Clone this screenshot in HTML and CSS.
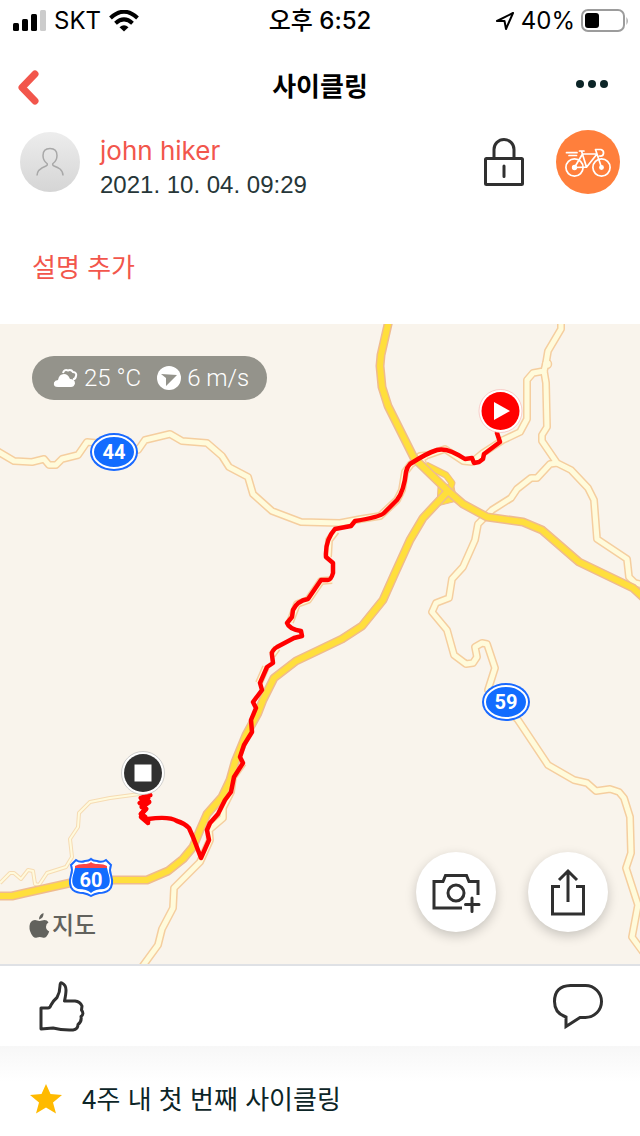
FILE: index.html
```html
<!DOCTYPE html>
<html lang="ko">
<head>
<meta charset="utf-8">
<meta name="viewport" content="width=device-width, initial-scale=1">
<title>사이클링</title>
<link rel="stylesheet" href="styles.css">
</head>
<body>
<div class="status-bar">
  <div class="status-side">
    <svg width="34" height="22" viewBox="0 0 34 22" aria-hidden="true">
      <rect x="1" y="13" width="6" height="8" rx="1.5"/><rect x="10" y="9" width="6" height="12" rx="1.5"/>
      <rect x="19" y="4" width="6" height="17" rx="1.5"/><rect x="28" y="0" width="6" height="21" rx="1.5" fill="#ccc"/>
    </svg>
    <span class="carrier">SKT</span>
    <svg width="30" height="22" viewBox="0 0 30 22" fill="none" stroke="#000" stroke-width="4" aria-hidden="true">
      <path d="M1.5 8Q15-4.500 28.500 8M6.500 13.200Q15 5.500 23.500 13.200"/>
      <path d="M10.500 17.200Q15 13.200 19.500 17.200L15 21.500Z" fill="#000" stroke="none"/>
    </svg>
  </div>
  <time class="clock">오후 6:52</time>
  <div class="status-side status-right">
    <svg width="20" height="20" viewBox="0 0 20 20" fill="none" stroke="#000" stroke-width="2" stroke-linejoin="round" aria-hidden="true"><path d="M18 2 2 10h7.500l1.500 8z"/></svg>
    <span>40%</span>
    <svg class="battery" width="48" height="24" viewBox="0 0 48 24" aria-hidden="true">
      <rect x="1" y="1" width="42" height="21" rx="6" fill="none" stroke="#9c9c9c" stroke-width="2"/>
      <rect x="4" y="4" width="14" height="15" rx="3"/><path d="M45.500 8q2.500 4 0 8z" fill="#999"/>
    </svg>
  </div>
</div>

<header class="nav">
  <button class="icon-button" aria-label="뒤로"><svg width="24" height="36" viewBox="0 0 24 36" fill="none" stroke="#f2564c" stroke-width="7" stroke-linecap="round" stroke-linejoin="round"><path d="M18 5 5 18.500 18 32"/></svg></button>
  <h1>사이클링</h1>
  <button class="icon-button more" aria-label="더 보기"><svg width="34" height="16" viewBox="0 0 34 16" fill="#0c2527"><circle cx="5" cy="5" r="4"/><circle cx="17" cy="5" r="4"/><circle cx="29" cy="5" r="4"/></svg></button>
</header>

<main>
<section class="author">
  <svg class="avatar" width="60" height="60" viewBox="0 0 60 60" role="img" aria-label="프로필 사진">
    <defs><linearGradient id="avatar-fill" x2="0" y2="1"><stop stop-color="#ededed"/><stop offset="1" stop-color="#d5d5d5"/></linearGradient></defs>
    <circle cx="30" cy="30" r="30" fill="url(#avatar-fill)"/>
    <path d="M17 43.500C17 38 22 35.500 26 34q2-.8 1-2.500Q23 28.500 23 23.500 23 16.500 30 16.500T37 23.500Q37 28.500 33 31.500q-1 1.700 1 2.500 4 1.500 6 3 3 2.500 3 6.500" fill="none" stroke="#a8a8a8" stroke-width="1.500"/>
  </svg>
  <div class="author-text"><a class="name" href="#profile">john hiker</a><time class="date">2021. 10. 04. 09:29</time></div>
  <button class="icon-button" aria-label="비공개"><svg width="40" height="50" viewBox="0 0 40 50" fill="none" stroke="#303030" stroke-width="3" stroke-linecap="round"><rect x="1.500" y="21.500" width="37" height="26" rx="1"/><path d="M10 21V12.500a10 10 0 0 1 20 0V21M20 29v10.500"/></svg></button>
  <svg class="sport" width="64" height="64" viewBox="0 0 64 64" fill="none" stroke="#fff" stroke-width="1.700" stroke-linecap="round" stroke-linejoin="round" role="img" aria-label="사이클링">
    <circle cx="32" cy="32" r="32" fill="#ff7f3c" stroke="none"/>
    <circle cx="18.500" cy="37.500" r="8.600"/><circle cx="45.500" cy="37.500" r="8.600"/>
    <circle cx="18.500" cy="37.500" r="1.800" fill="#fff"/><circle cx="45.500" cy="37.500" r="1.600" fill="#fff"/>
    <path d="M18.500 37.500 26.500 24H41L30.500 37.200 18.500 37.500M30.500 37.200 25.500 21M23.500 21h4.500M45.500 37.500 39.500 19.500H45q3 1 2.500 4t-4 2.500M10.500 22.700H21M13 25.500h7.500"/>
  </svg>
</section>
<a class="describe" href="#describe">설명 추가</a>

<section class="map" aria-label="지도">
  <svg class="map-canvas" viewBox="0 324 640 640" preserveAspectRatio="xMidYMid slice">
    <defs>
      <g id="thin-roads"><path d="M140 794 110 798 90 802 79 813 78 827 70 839 72 857 66 867 47 873 39 885 35 884 33 871 28 870 21 879 14 873H10L0 883"/></g>
      <g id="roads">
        <path d="M-3 451 14 461 32 462 44 459 49 465H56L62 459 78 455 87 442 97 443 138 450 145 440 170 434 182 441 207 443 222 456 229 467 248 477 253 494 272 511 301 522 340 523 361 519 380 516 397 500 402 490 405 472 411 464 426 456"/>
        <path d="M561 320V329L548 351 546 363 544 371 533 373 527 380V419L520 432 503 440 483 453 472 462 463 461 445 449 428 455 420 456 424 466"/>
        <path d="M544 371 546 383 547 427 542 435V441L557 463 571 470 588 488 594 500 597 539 627 559 629 577 635 583 644 585"/>
        <path d="M557 463 550 464 537 478H531L517 489 511 498 492 510 478 524 475 540 463 567 452 579 449 598 436 603 432 612 447 630 454 655 466 664 473 663 477 657 475 647 482 643 487 644 495 668 488 690 518 720 548 765 574 780 587 783 596 791 610 789 619 792 624 798 630 817 631 853 626 868 638 905 632 937 643 952"/>
        <path d="M142 967 158 945 162 929 173 908 174 888 200 862 210 840 209 830 223 818 223 808 231 792 233 777 243 763 M336 531 329 540 328 557 M332 580 321 581 308 600 297 604 290 622 M277 648 272 655 M266 667 259 683"/>
      </g>
      <g id="motorways">
        <path d="M389 320 381 355 380 366 382 387 388 406 414 458 448 491 463 504 487 517 523 522 542 530 579 562 633 588 644 598"/>
        <path d="M448 491 437 503 423 518 410 540 395 573 383 600 362 626 342 639 317 651 296 661 274 678 263 700 258 713 246 735 235 762 230 780 222 797 207 814 200 830 193 847 183 859 168 871 147 880H112L70 883 25 893 12 896H-4"/>
      </g>
      <path id="ramps" d="M426 465 446 475 452 483 449 491"/>
    </defs>
    <rect y="324" width="640" height="640" fill="#f9f4ec"/>
    <g fill="none" stroke-linejoin="round">
      <use href="#thin-roads" stroke="#f6dbb3" stroke-width="4"/><use href="#thin-roads" stroke="#fffadd" stroke-width="2"/>
      <use href="#roads" stroke="#f5ce9f" stroke-width="8"/><circle cx="547" cy="364" r="4.500" fill="#fffbdb" stroke="#f5ce9f" stroke-width="1.500"/><use href="#roads" stroke="#fffbdb" stroke-width="5"/>
      <path d="M438 487 437 506 457 501 453 482" fill="#ffdf3c" stroke="#efbb8f"/>
      <use href="#ramps" stroke="#efbb8f" stroke-width="7"/><use href="#ramps" stroke="#ffdf3c" stroke-width="5"/>
      <use href="#motorways" stroke="#efbb8f" stroke-width="9"/><use href="#motorways" stroke="#ffdf3c" stroke-width="6"/>
      <path stroke="#f00" stroke-width="4.500" stroke-linecap="round" d="M497 433 500 442 484 454 483 459 479 462 474 463 472 458 465 459Q447 447 437 450T410 464Q407 467 406 472Q404 491 397 500L384 513Q380 517 355 521L351 526 335 529Q325 540 326 557L333 563V573Q331 580 328 580H321L308 599Q297 601 293 610L292 617 287 623Q289 629 301 631L302 636 294 638 277 647Q271 651 272 655L273 663 267 667 260 683 262 690 253 702 256 708 251 720 252 732 244 745 240 757 243 763 234 777 231 792 225 800 218 814 210 823 207 830 209 840 201 858 193 837 189 828Q184 823 177 821Q169 816 148 819L148 823 141 817 145 808"/>
      <path d="M150 795 141 798 148 798 140 803 149 802 142 807 146 809 141 814 145 817" stroke="#f00" stroke-width="5" stroke-linecap="round"/>
    </g>
    <g class="shield">
      <ellipse cx="114" cy="452" rx="24" ry="19" fill="#1969ff"/><ellipse cx="114" cy="452" rx="21" ry="16" fill="#126cff" stroke="#fff" stroke-width="2"/><text x="114" y="459">44</text>
      <ellipse cx="506" cy="702" rx="24" ry="19" fill="#1969ff"/><ellipse cx="506" cy="702" rx="21" ry="16" fill="#126cff" stroke="#fff" stroke-width="2"/><text x="506" y="709">59</text>
      <path d="M76 860q4 3 9 1 4 0 6-2 2 2 6 2 5 2 9-1l5 5q-2 5 0 10 3 10-2 15-4 3-10 3-5 1-8 3-3-2-8-3-6 0-10-3-5-5-2-15 2-5 0-10z" fill="#fff" stroke="#1969ff" stroke-width="2"/>
      <path d="M75 868h32l1 4q5 14-4 17-9 0-13 4-4-4-13-4-9-3-4-17z" fill="#126cff"/><path d="M75 866q3-2 9-2 5 0 7-2 2 2 7 2 6 0 9 2v2H75z" fill="#fb4647"/><text x="91" y="887">60</text>
    </g>
    <circle cx="500.500" cy="411" r="21.500" fill="#fff" stroke="#f6b9b4" stroke-width="0.700"/><circle cx="500.500" cy="411" r="19" fill="red"/><path d="M494 402v18l16-9z" fill="#fff"/>
    <circle cx="143" cy="773" r="21.500" fill="#fff" stroke="#bbb" stroke-width="0.700"/><circle cx="143" cy="773" r="19" fill="#303030"/><path d="M134.500 764.500h17v17h-17z" fill="#fff"/>
  </svg>
  <div class="weather">
    <svg width="26" height="20" viewBox="0 0 26 20" aria-hidden="true"><path d="M11 5q1-4 5-2.500 3-1.500 5 1.500 4 .5 3 4-.5 3-3 3.500" fill="none" stroke="#fff" stroke-width="2"/><path d="M6 19Q1 19 2 14.500 3 12 6 12 7 6 12 6q4 0 6 5 5 0 5 4.500-1 3.500-4 3.500z" fill="#fff"/></svg>
    <span>25 °C</span>
    <svg class="wind" width="24" height="24" viewBox="0 0 24 24" aria-hidden="true"><circle cx="12" cy="12" r="12" fill="#fff"/><path d="M4 8 20 9 9 20V12z" fill="#94938b"/></svg>
    <span>6 m/s</span>
  </div>
  <a class="map-credit" href="#legal"><svg width="22" height="26" viewBox="0 0 22 26" fill="#62625d" aria-hidden="true"><path d="M11.500 8C13.500 8 14.500 7 16.500 7q2.500 0 4 2.300-2.500 1.700-2.500 4.500 0 3.200 3.200 4.700-1 3-2.700 5-1.800 2-4 1-2.700-1.200-5.500 0-2 1-4-1-4-5-3.500-10.500Q2 7.500 7 7 9 7.300 11.500 8M11 6.500Q11 1.500 15.500 0q.5 5-4.500 6.500"/></svg><span>지도</span></a>
  <div class="map-actions">
    <button aria-label="사진 추가"><svg width="80" height="80" viewBox="0 0 80 80"><path d="M46 56H18V29.500h9l2.500-6h21l2.500 6h9V43"/><circle cx="40" cy="41" r="8"/><path d="M56 46v13.500M49.500 52.500H63" stroke-linecap="round"/></svg></button>
    <button aria-label="공유"><svg width="80" height="80" viewBox="0 0 80 80"><path d="M32 34.500h-7.500V62h31V34.500H48M40 50V19M31 28l9-9 9 9"/></svg></button>
  </div>
</section>

<div class="social">
  <button class="icon-button" aria-label="좋아요"><svg width="52" height="56" viewBox="0 0 52 56" fill="none" stroke="#303030" stroke-width="3" stroke-linejoin="round"><path d="M5 51v-21h7Q14 30 15 27 17 23 21 19.500 24 14 24 8q0-4 2-3 4 2 4 7 0 4-1.500 11H39q5 .5 7 5l-.5 4q3 4-.5 6.500 1 5-3 8 0 5-5 5.500-11 .5-20-2z"/></svg></button>
  <button class="icon-button" aria-label="댓글"><svg width="56" height="56" viewBox="0 0 56 56" fill="none" stroke="#303030" stroke-width="3"><path d="M20.500 7.500h15a16 16 0 0 1 0 32H30L16 48.500V39Q4.500 35.500 4.500 23.500 4.500 8 20.500 7.500z"/></svg></button>
</div>
<section class="achievement">
  <svg width="32" height="32" viewBox="0 0 32 32" fill="#ffba00" aria-hidden="true"><path d="m16 2 4.500 10L32 13 23 20.500l3 11-10-6-10 6 3-11L0 13l11.500-1z"/></svg>
  <span>4주 내 첫 번째 사이클링</span>
</section>
</main>
</body>
</html>
```
FILE: styles.css
```css
* { box-sizing: border-box; }
body { margin: 0; background: #fff; color: #0c2527; font-family: Inter, "Noto Sans CJK KR", sans-serif; font-size: 24px; line-height: 32px; }
svg { display: block; flex: none; }
a { color: inherit; text-decoration: none; }
button { padding: 0; border: 0; background: none; cursor: pointer; }
.icon-button { display: flex; justify-content: flex-start; }
.status-bar { display: grid; grid-template-columns: 1fr auto 1fr; align-items: center; height: 42px; padding: 0 12px; color: #000; }
.status-side { display: flex; align-items: center; gap: 8px; }
.status-right { justify-content: flex-end; gap: 6px; }
.clock { font-weight: 500; }
.battery { margin-right: -1px; }
.nav { display: grid; grid-template-columns: 1fr auto 1fr; align-items: center; height: 90px; padding: 0 17px; }
.nav h1 { margin: 0; font-size: 26px; font-weight: 700; color: #000; }
.nav .more { justify-content: flex-end; padding-right: 14px; }
.author { display: flex; align-items: center; height: 60px; padding: 0 20px; }
.author-text { display: flex; flex: 1; flex-direction: column; margin-left: 20px; padding-top: 10px; }
.name { font-size: 26px; line-height: 36px; color: #f2564c; }
.date { color: #263638; font-family: "Liberation Sans", sans-serif; }
.sport { margin-left: 32px; }
.describe { display: block; padding: 56px 32px 36px; font-size: 26px; line-height: 40px; color: #f2564c; }
.map { position: relative; aspect-ratio: 1; overflow: hidden; }
.map-canvas { width: 100%; height: 100%; }
.shield text { fill: #fff; font: 700 20px Roboto, sans-serif; text-anchor: middle; }
.weather { position: absolute; top: 32px; left: 32px; display: flex; align-items: center; gap: 6px; height: 44px; padding: 0 20px; border-radius: 22px; background: #94938b; color: #fff; font-family: Roboto, sans-serif; font-weight: 300; white-space: nowrap; }
.wind { margin-left: 10px; }
.weather span:last-child { margin-right: -2px; }
.map-credit { position: absolute; bottom: 22px; left: 28px; display: flex; align-items: center; gap: 2px; color: #62625d; font-weight: 500; }
.map-actions { position: absolute; right: 32px; bottom: 32px; display: flex; gap: 32px; }
.map-actions button { width: 80px; height: 80px; border-radius: 50%; background: #fff; box-shadow: 0 4px 12px #0003; }
.map-actions svg { fill: none; stroke: #303030; stroke-width: 3; }
.social { display: flex; align-items: center; justify-content: space-between; height: 82px; padding: 0 34px 0 36px; border-top: 2px solid #dfe1e5; }
.achievement { display: flex; align-items: center; gap: 20px; padding: 36px 30px 22px; background: linear-gradient(#f7f7f7, #fff 36px); font-family: "Noto Sans CJK KR", sans-serif; font-size: 26px; }
```
